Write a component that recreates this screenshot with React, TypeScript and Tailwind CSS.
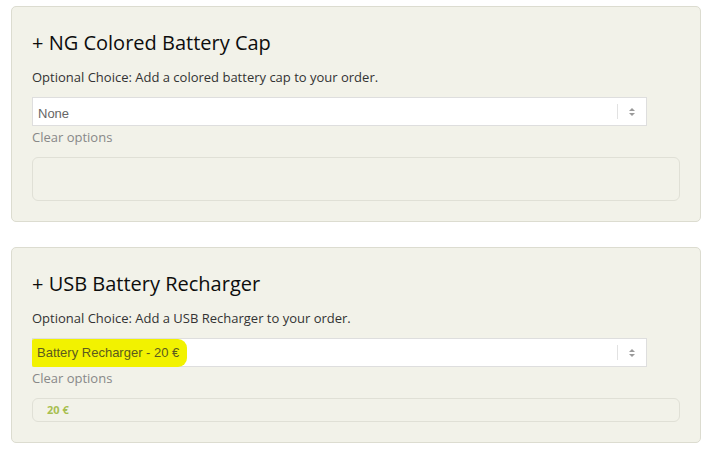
interface OptionCardProps {
  title: string;
  description: string;
  value: string;
  highlighted?: boolean;
  price?: string;
}

function SelectArrows() {
  return (
    <svg width="8" height="10" viewBox="0 0 8 10" className="block">
      <path d="M4 1 L7 4 L1 4 Z" fill="#9a9a9a" />
      <path d="M4 9 L7 6 L1 6 Z" fill="#9a9a9a" />
    </svg>
  );
}

function OptionCard({ title, description, value, highlighted, price }: OptionCardProps) {
  return (
    <div className="ml-[11px] w-[690px] rounded-[5px] border border-[#dcdcd0] bg-[#f2f2e9] px-5 pt-[22px]">
      <h2 className="text-[20px] font-medium leading-[28px] text-[#0d0d0d] font-['Open_Sans',sans-serif]">{title}</h2>
      <p className="mt-[11px] text-[13px] leading-[18px] text-[#333] font-['Open_Sans',sans-serif]">
        {description}
      </p>
      {/* Select */}
      <div className="mt-[11px] flex h-[29px] w-[615px] items-center border border-[#dedede] bg-white">
        <div className="flex-1 pl-[4px]">
          {highlighted ? (
            <span className="-ml-[5px] inline-flex h-[28px] items-center rounded-[2px_9px_9px_2px] bg-[#f2f200] pl-[5px] pr-[8px] text-[13px] text-[#5b5b1e] font-['Liberation_Sans',sans-serif]">
              {value}
            </span>
          ) : (
            <span className="pl-[1px] text-[13px] text-[#666] font-['Liberation_Sans',sans-serif]">{value}</span>
          )}
        </div>
        <div className="h-[15px] w-px bg-[#e2e2e2]" />
        <div className="flex w-[28px] justify-center">
          <SelectArrows />
        </div>
      </div>
      <div className="mt-[1px] text-[13px] leading-[20px] text-[#888] font-['Open_Sans',sans-serif]">Clear options</div>
      {price ? (
        <div className="mb-[20px] mt-[10px] flex h-[24px] w-[648px] items-center rounded-[6px] border border-[#e0e0d6] pl-[14px] text-[11px] font-bold text-[#a8bf50] font-['Open_Sans',sans-serif]">
          {price}
        </div>
      ) : (
        <div className="mb-[20px] mt-[10px] h-[44px] w-[648px] rounded-[6px] border border-[#e0e0d6]" />
      )}
    </div>
  );
}

export default function App() {
  return (
    <div className="h-[464px] w-[714px] bg-white pt-[6px]">
      <OptionCard
        title="+ NG Colored Battery Cap"
        description="Optional Choice: Add a colored battery cap to your order."
        value="None"
      />
      <div className="h-[25px]" />
      <OptionCard
        title="+ USB Battery Recharger"
        description="Optional Choice: Add a USB Recharger to your order."
        value="Battery Recharger - 20 €"
        highlighted
        price="20 €"
      />
    </div>
  );
}
